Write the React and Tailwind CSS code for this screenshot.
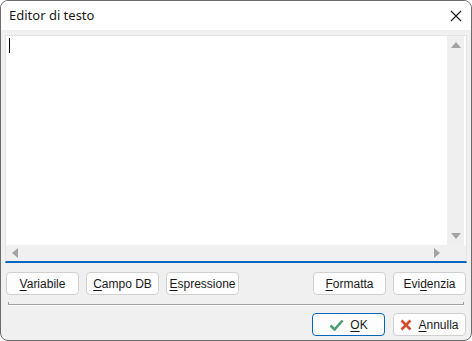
const Btn = ({ children, primary, className = "" }) => (
  <button
    className={`h-[23px] w-[73px] flex items-center justify-center gap-[6px] rounded-[4px] border bg-[#fdfdfd] text-[12px] text-[#1a1a1a] ${
      primary ? "border-[#0067c0]" : "border-[#d0d0d0]"
    } ${className}`}
  >
    {children}
  </button>
);

const U = ({ children }) => <span className="underline underline-offset-[2px]">{children}</span>;

const Tri = ({ dir }) => {
  const pts = {
    up: "0,7 5,1 10,7",
    down: "0,1 5,7 10,1",
    left: "7,0 1,5 7,10",
    right: "1,0 7,5 1,10",
  }[dir];
  const vert = dir === "up" || dir === "down";
  return (
    <svg width={vert ? 10 : 8} height={vert ? 8 : 10} viewBox={vert ? "0 0 10 8" : "0 0 8 10"}>
      <polygon points={pts} fill="#a3a3a3" />
    </svg>
  );
};

export default function App() {
  return (
    <div
      className="w-[472px] h-[341px] flex flex-col overflow-hidden rounded-[8px] border border-[#6b6b6b] bg-[#f0f0f0]"
      style={{ fontFamily: '"Liberation Sans", Arial, sans-serif' }}
    >
      <div className="h-[29px] shrink-0 bg-white flex items-center justify-between pl-[8px] pr-[9px]">
        <span className="text-[13px] text-[#1a1a1a]" style={{ fontFamily: '"Noto Sans", sans-serif' }}>
          Editor di testo
        </span>
        <svg width="12" height="12" viewBox="0 0 12 12">
          <path d="M1 1 L11 11 M11 1 L1 11" stroke="#1a1a1a" strokeWidth="1.1" />
        </svg>
      </div>

      <div className="flex-1 flex flex-col px-[4px] pt-[5px]">
        <div className="h-[228px] flex flex-col border border-[#e3e3e3] border-b-2 border-b-[#0067c0] bg-white">
          <div className="flex-1 flex">
            <div className="flex-1 pl-[3px] pt-[2px]">
              <div className="w-[1px] h-[15px] bg-black" />
            </div>
            <div className="w-[17px] bg-[#efefef] flex flex-col items-center justify-between py-[5px] mr-[2px]">
              <Tri dir="up" />
              <Tri dir="down" />
            </div>
          </div>
          <div className="h-[16px] flex bg-[#f0f0f0]">
            <div className="flex-1 flex items-center justify-between pl-[5px] pr-[6px]">
              <Tri dir="left" />
              <Tri dir="right" />
            </div>
            <div className="w-[19px]" />
          </div>
        </div>

        <div className="mt-[9px] flex items-center px-[1px]">
          <div className="flex gap-[7px]">
            <Btn><span><U>V</U>ariabile</span></Btn>
            <Btn><span><U>C</U>ampo DB</span></Btn>
            <Btn><span><U>E</U>spressione</span></Btn>
          </div>
          <div className="ml-auto flex gap-[7px]">
            <Btn><span><U>F</U>ormatta</span></Btn>
            <Btn className="w-[72px]"><span>Evi<U>d</U>enzia</span></Btn>
          </div>
        </div>

        <div className="mt-[7px] mx-[3px] h-[3px] border border-t-0 border-[#a0a0a0] border-b-[#a0a0a0] shadow-[0_1px_0_#ffffff]" />

        <div className="mt-[8px] flex justify-end gap-[8px] pr-[1px]">
          <Btn primary>
            <svg width="15" height="12" viewBox="0 0 15 12">
              <path d="M1.5 6.5 L5.5 10.5 L13.5 1.5" fill="none" stroke="#4c9f73" strokeWidth="2.6" />
            </svg>
            <span><U>O</U>K</span>
          </Btn>
          <Btn className="w-[72px]">
            <svg width="12" height="12" viewBox="0 0 12 12">
              <path d="M1.5 1.5 L10.5 10.5 M10.5 1.5 L1.5 10.5" stroke="#d64a2e" strokeWidth="2.6" />
            </svg>
            <span><U>A</U>nnulla</span>
          </Btn>
        </div>
      </div>
    </div>
  );
}
